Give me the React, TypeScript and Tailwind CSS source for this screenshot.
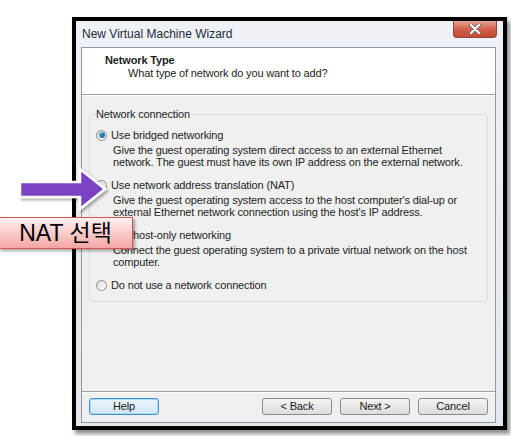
import React from "react";

const font = { fontFamily: '"Liberation Sans", Arial, sans-serif' };

const Radio = ({ checked }: { checked?: boolean }) => (
  <span className="relative flex h-[11px] w-[11px] shrink-0 items-center justify-center rounded-full border border-[#8a8a8a] bg-gradient-to-br from-[#dcdcdc] to-[#ffffff]">
    {checked && (
      <span className="h-[6px] w-[6px] rounded-full bg-gradient-to-br from-[#62c0f2] to-[#0f4f85]" />
    )}
  </span>
);

interface OptionProps {
  label: string;
  desc?: string[];
  checked?: boolean;
}

const Option: React.FC<OptionProps> = ({ label, desc, checked }) => (
  <div>
    <div className="flex h-[14px] items-center gap-[4px]">
      <Radio checked={checked} />
      <span>{label}</span>
    </div>
    {desc && (
      <div className="mt-[2px] pl-[17px] leading-[12px]">
        {desc.map((d) => (
          <div key={d}>{d}</div>
        ))}
      </div>
    )}
  </div>
);

const WizButton = ({ children, focused }: { children: React.ReactNode; focused?: boolean }) => (
  <button
    className={
      focused
        ? "h-[17px] w-[70px] rounded-[3px] border border-[#3c8fd0] bg-gradient-to-b from-[#eaf6fd] to-[#d2e6f3] text-[11px] leading-none text-[#1a1a1a] shadow-[inset_0_0_0_1px_#a8dcf7]"
        : "h-[17px] w-[70px] rounded-[3px] border border-[#8a8a8a] bg-gradient-to-b from-[#f4f4f4] to-[#dcdcdc] text-[11px] leading-none text-[#1a1a1a]"
    }
  >
    {children}
  </button>
);

export default function App() {
  return (
    <div className="relative h-[436px] w-[511px] overflow-hidden bg-white pl-[72px] pt-[17px]" style={font}>
      {/* window */}
      <div className="flex h-[413px] w-[435px] flex-col border-4 border-black bg-gradient-to-b from-[#eef1f5] to-[#e4e9ef] shadow-[3px_4px_4px_rgba(0,0,0,0.45)]">
        <div className="flex h-[26px] shrink-0 items-start justify-between pl-[6px]">
          <span className="mt-[4px] text-[12px] text-[#1f2a3a]">New Virtual Machine Wizard</span>
          <div className="mr-[6px] flex h-[17px] w-[44px] items-center justify-center rounded-b-[4px] border border-t-0 border-[#93473a] bg-gradient-to-b from-[#e6a497] via-[#d0604a] to-[#c24a33]">
            <svg width="12" height="10" viewBox="0 0 12 10">
              <path d="M2 1 L10 9 M10 1 L2 9" stroke="#6a6a6a" strokeWidth="3.6" strokeLinecap="round" />
              <path d="M2 1 L10 9 M10 1 L2 9" stroke="#ffffff" strokeWidth="2" strokeLinecap="round" />
            </svg>
          </div>
        </div>

        <div className="flex flex-1 flex-col pb-[3px] pl-[5px] pr-[7px]">
          <div className="flex flex-1 flex-col border border-[#8e98a4] bg-[#f0f0f0] text-[11px] tracking-[-0.15px] text-[#1e1e1e]">
            {/* header */}
            <div className="h-[47px] shrink-0 border-b border-[#a0a0a0] bg-white pl-[23px] pt-[6px]">
              <div className="font-bold leading-[13px]">Network Type</div>
              <div className="pl-[23px] leading-[13px]">What type of network do you want to add?</div>
            </div>

            <div className="flex flex-1 flex-col border-t border-white">
              <fieldset className="mx-[7px] mt-[12px] rounded-[3px] border border-[#d5dfe5] pb-[9px] pl-[6px] pt-[7px]">
                <legend className="-ml-[1px] px-[1px] leading-[13px]">Network connection</legend>
                <div className="flex flex-col gap-[10px]">
                  <Option
                    checked
                    label="Use bridged networking"
                    desc={[
                      "Give the guest operating system direct access to an external Ethernet",
                      "network. The guest must have its own IP address on the external network.",
                    ]}
                  />
                  <Option
                    label="Use network address translation (NAT)"
                    desc={[
                      "Give the guest operating system access to the host computer's dial-up or",
                      "external Ethernet network connection using the host's IP address.",
                    ]}
                  />
                  <Option
                    label="Use host-only networking"
                    desc={[
                      "Connect the guest operating system to a private virtual network on the host",
                      "computer.",
                    ]}
                  />
                  <Option label="Do not use a network connection" />
                </div>
              </fieldset>

              <div className="flex-1" />

              <div className="border-t border-[#a0a0a0] shadow-[0_1px_0_#ffffff]" />
              <div className="flex h-[30px] items-start px-[7px] pt-[6px]">
                <WizButton focused>Help</WizButton>
                <div className="flex-1" />
                <div className="flex gap-[8px]">
                  <WizButton>&lt; Back</WizButton>
                  <WizButton>Next &gt;</WizButton>
                  <WizButton>Cancel</WizButton>
                </div>
              </div>
            </div>
          </div>
        </div>
      </div>

      {/* annotation arrow */}
      <svg className="absolute left-[16px] top-[164px]" width="94" height="50" viewBox="0 0 94 50">
        <defs>
          <filter id="sh" x="-20%" y="-20%" width="140%" height="140%">
            <feDropShadow dx="2" dy="2" stdDeviation="1.5" floodColor="#000" floodOpacity="0.35" />
          </filter>
        </defs>
        <polygon
          points="4,18 64,18 64,5 89,25 64,45 64,33 4,33"
          fill="#7b43c4"
          stroke="#ffffff"
          strokeWidth="2.5"
          strokeLinejoin="miter"
          filter="url(#sh)"
        />
      </svg>

      {/* annotation label */}
      <div
        className="absolute left-[-2px] top-[217px] flex h-[32px] w-[135px] items-center justify-center border border-[#d9534f] bg-gradient-to-b from-[#fff1f1] via-[#fbcccc] to-[#f4a4a4] text-[23px] text-black shadow-[2px_2px_3px_rgba(0,0,0,0.35)]"
        style={{ fontFamily: '"Liberation Sans", "Noto Sans CJK KR", sans-serif' }}
      >
        NAT 선택
      </div>
    </div>
  );
}
